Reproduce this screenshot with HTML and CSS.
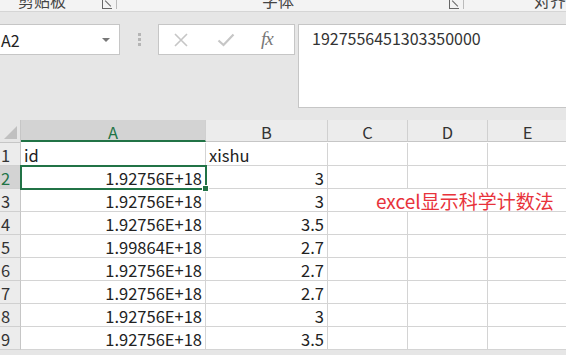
FILE: index.html
```html
<!DOCTYPE html>
<html>
  <head>
    <title>Excel - 科学计数法</title>
    <link rel="stylesheet" href="styles.css">
  </head>
  <body>
    <div class="ribbon">
      <div class="group group-clip">
        <span class="group-name">剪贴板</span>
        <span class="launcher"></span>
      </div>
      <div class="group group-font">
        <span class="group-name">字体</span>
        <span class="launcher"></span>
      </div>
      <div class="group group-align">
        <span class="group-name">对齐</span>
      </div>
    </div>

    <div class="formula-row">
      <div class="name-box">
        <span>A2</span>
        <span class="caret"></span>
      </div>
      <div class="grip">
        <i></i><i></i><i></i>
      </div>
      <div class="fx-buttons">
        <svg class="btn-cancel" width="16" height="14" viewBox="0 0 16 14">
          <path d="M2 1 L14 13 M14 1 L2 13" stroke="#c6c6c6" stroke-width="1.6" fill="none"/>
        </svg>
        <svg class="btn-enter" width="18" height="14" viewBox="0 0 18 14">
          <path d="M1.5 7.5 L6.5 12 L16.5 1.5" stroke="#c6c6c6" stroke-width="2.2" fill="none"/>
        </svg>
        <span class="fx">fx</span>
      </div>
      <div class="formula-input">1927556451303350000</div>
    </div>

    <div class="sheet">
      <div class="corner"><span class="corner-tri"></span></div>
      <div class="col-head active-col">A</div>
      <div class="col-head">B</div>
      <div class="col-head">C</div>
      <div class="col-head">D</div>
      <div class="col-head">E</div>

      <div class="row-head">1</div>
      <div class="cell">id</div>
      <div class="cell">xishu</div>
      <div class="cell"></div>
      <div class="cell"></div>
      <div class="cell"></div>

      <div class="row-head active-row">2</div>
      <div class="cell num active">1.92756E+18</div>
      <div class="cell num">3</div>
      <div class="cell"></div>
      <div class="cell"></div>
      <div class="cell"></div>

      <div class="row-head">3</div>
      <div class="cell num">1.92756E+18</div>
      <div class="cell num">3</div>
      <div class="cell note-cell"><span class="note">excel显示科学计数法</span></div>
      <div class="cell no-line"></div>
      <div class="cell"></div>

      <div class="row-head">4</div>
      <div class="cell num">1.92756E+18</div>
      <div class="cell num">3.5</div>
      <div class="cell"></div>
      <div class="cell"></div>
      <div class="cell"></div>

      <div class="row-head">5</div>
      <div class="cell num">1.99864E+18</div>
      <div class="cell num">2.7</div>
      <div class="cell"></div>
      <div class="cell"></div>
      <div class="cell"></div>

      <div class="row-head">6</div>
      <div class="cell num">1.92756E+18</div>
      <div class="cell num">2.7</div>
      <div class="cell"></div>
      <div class="cell"></div>
      <div class="cell"></div>

      <div class="row-head">7</div>
      <div class="cell num">1.92756E+18</div>
      <div class="cell num">2.7</div>
      <div class="cell"></div>
      <div class="cell"></div>
      <div class="cell"></div>

      <div class="row-head">8</div>
      <div class="cell num">1.92756E+18</div>
      <div class="cell num">3</div>
      <div class="cell"></div>
      <div class="cell"></div>
      <div class="cell"></div>

      <div class="row-head">9</div>
      <div class="cell num">1.92756E+18</div>
      <div class="cell num">3.5</div>
      <div class="cell"></div>
      <div class="cell"></div>
      <div class="cell"></div>
    </div>
  </body>
</html>
```

FILE: styles.css
```css
body {
  font-family: "Noto Sans CJK SC", "Noto Sans", sans-serif;
  margin: 0;
  padding: 0;
  width: 566px;
  height: 355px;
  overflow: hidden;
  background-color: #e6e6e6;
}

.ribbon {
  height: 11px;
  background-color: #f3f3f3;
  border-bottom: 1px solid #d5d5d5;
  display: flex;
  overflow: hidden;
  color: #444;
}

.group {
  display: flex;
  align-items: flex-end;
  height: 11px;
}

.group-name {
  font-size: 16px;
  line-height: 16px;
  margin-bottom: 3px;
  white-space: nowrap;
}

.group-clip {
  width: 263px;
  padding-left: 18px;
  box-sizing: border-box;
}

.group-clip .launcher {
  margin-left: 36px;
}

.group-font {
  width: 275px;
  padding-left: 1px;
  box-sizing: border-box;
}

.group-font .launcher {
  margin-left: 155px;
}

.launcher {
  width: 9px;
  height: 9px;
  border-left: 1px solid #666;
  border-bottom: 1px solid #666;
  margin-bottom: 2px;
  position: relative;
}

.launcher::before {
  content: "";
  position: absolute;
  left: 1px;
  top: 4px;
  width: 8px;
  height: 1px;
  background-color: #666;
  transform: rotate(45deg);
}

.launcher::after {
  content: "";
  position: absolute;
  left: 13px;
  top: 0;
  width: 1px;
  height: 10px;
  background-color: #bbb;
}

.formula-row {
  display: flex;
  height: 84px;
  margin-top: 12px;
  margin-bottom: 12px;
}

.name-box {
  width: 120px;
  height: 31px;
  box-sizing: border-box;
  background-color: white;
  border: 1px solid #c6c6c6;
  border-left: none;
  display: flex;
  align-items: center;
  justify-content: space-between;
  padding: 0 9px 0 1px;
  font-size: 16px;
  color: #222;
}

.caret {
  width: 0;
  height: 0;
  border-left: 4px solid transparent;
  border-right: 4px solid transparent;
  border-top: 4px solid #777;
}

.grip {
  width: 38px;
  height: 31px;
  display: flex;
  flex-direction: column;
  align-items: center;
  justify-content: center;
  gap: 2px;
}

.grip i {
  display: block;
  width: 3px;
  height: 3px;
  background-color: #b5b5b5;
}

.fx-buttons {
  width: 137px;
  height: 31px;
  box-sizing: border-box;
  background-color: white;
  border: 1px solid #c6c6c6;
  display: flex;
  align-items: center;
  padding-left: 14px;
}

.btn-enter {
  margin-left: 28px;
}

.fx {
  margin-left: 26px;
  font-family: "Liberation Serif", serif;
  font-style: italic;
  font-size: 19px;
  color: #777;
  letter-spacing: -1px;
  margin-top: -2px;
}

.formula-input {
  margin-left: 3px;
  flex: 1;
  height: 84px;
  box-sizing: border-box;
  background-color: white;
  border: 1px solid #c6c6c6;
  border-right: none;
  padding: 3px 0 0 13px;
  font-size: 16px;
  line-height: 20px;
  color: #333;
}

.sheet {
  display: grid;
  grid-template-columns: 21px 185px 122px 80px 80px 80px;
  grid-auto-rows: 23px;
  background-color: white;
}

.corner {
  background-color: #e6e6e6;
  border-right: 1px solid #c6c6c6;
  border-bottom: 1px solid #c6c6c6;
  position: relative;
  height: 22px;
}

.corner-tri {
  position: absolute;
  right: 3px;
  bottom: 3px;
  width: 0;
  height: 0;
  border-left: 13px solid transparent;
  border-bottom: 13px solid #c0c0c0;
}

.col-head {
  height: 22px;
  box-sizing: border-box;
  background-color: #ececec;
  border-right: 1px solid #d0d0d0;
  border-bottom: 1px solid #c6c6c6;
  text-align: center;
  font-size: 16.5px;
  line-height: 24px;
  color: #333;
}

.col-head.active-col {
  background-color: #d3d3d3;
  border-bottom: 2px solid #217346;
  color: #217346;
}

.row-head {
  box-sizing: border-box;
  background-color: #ececec;
  border-right: 1px solid #c6c6c6;
  border-bottom: 1px solid #d0d0d0;
  font-size: 16.5px;
  line-height: 24px;
  padding-left: 1px;
  color: #333;
  overflow: hidden;
}

.row-head.active-row {
  background-color: #d3d3d3;
  color: #217346;
}

.cell {
  box-sizing: border-box;
  border-right: 1px solid #d4d4d4;
  border-bottom: 1px solid #d4d4d4;
  font-size: 16.5px;
  line-height: 24px;
  padding: 0 3px;
  color: #222;
  white-space: nowrap;
}

.cell.num {
  text-align: right;
}

.cell.active {
  position: relative;
  outline: 2px solid #217346;
  outline-offset: -1px;
  z-index: 1;
}

.cell.active::after {
  content: "";
  position: absolute;
  right: -4px;
  bottom: -4px;
  width: 5px;
  height: 5px;
  background-color: #217346;
  border: 1px solid white;
}

.note-cell {
  border-right: none;
  overflow: visible;
  position: relative;
  z-index: 1;
}

.no-line {
  border-right: none;
}

.note {
  font-size: 19px;
  line-height: 24px;
  color: #e8333b;
  margin-left: 45px;
}
```
